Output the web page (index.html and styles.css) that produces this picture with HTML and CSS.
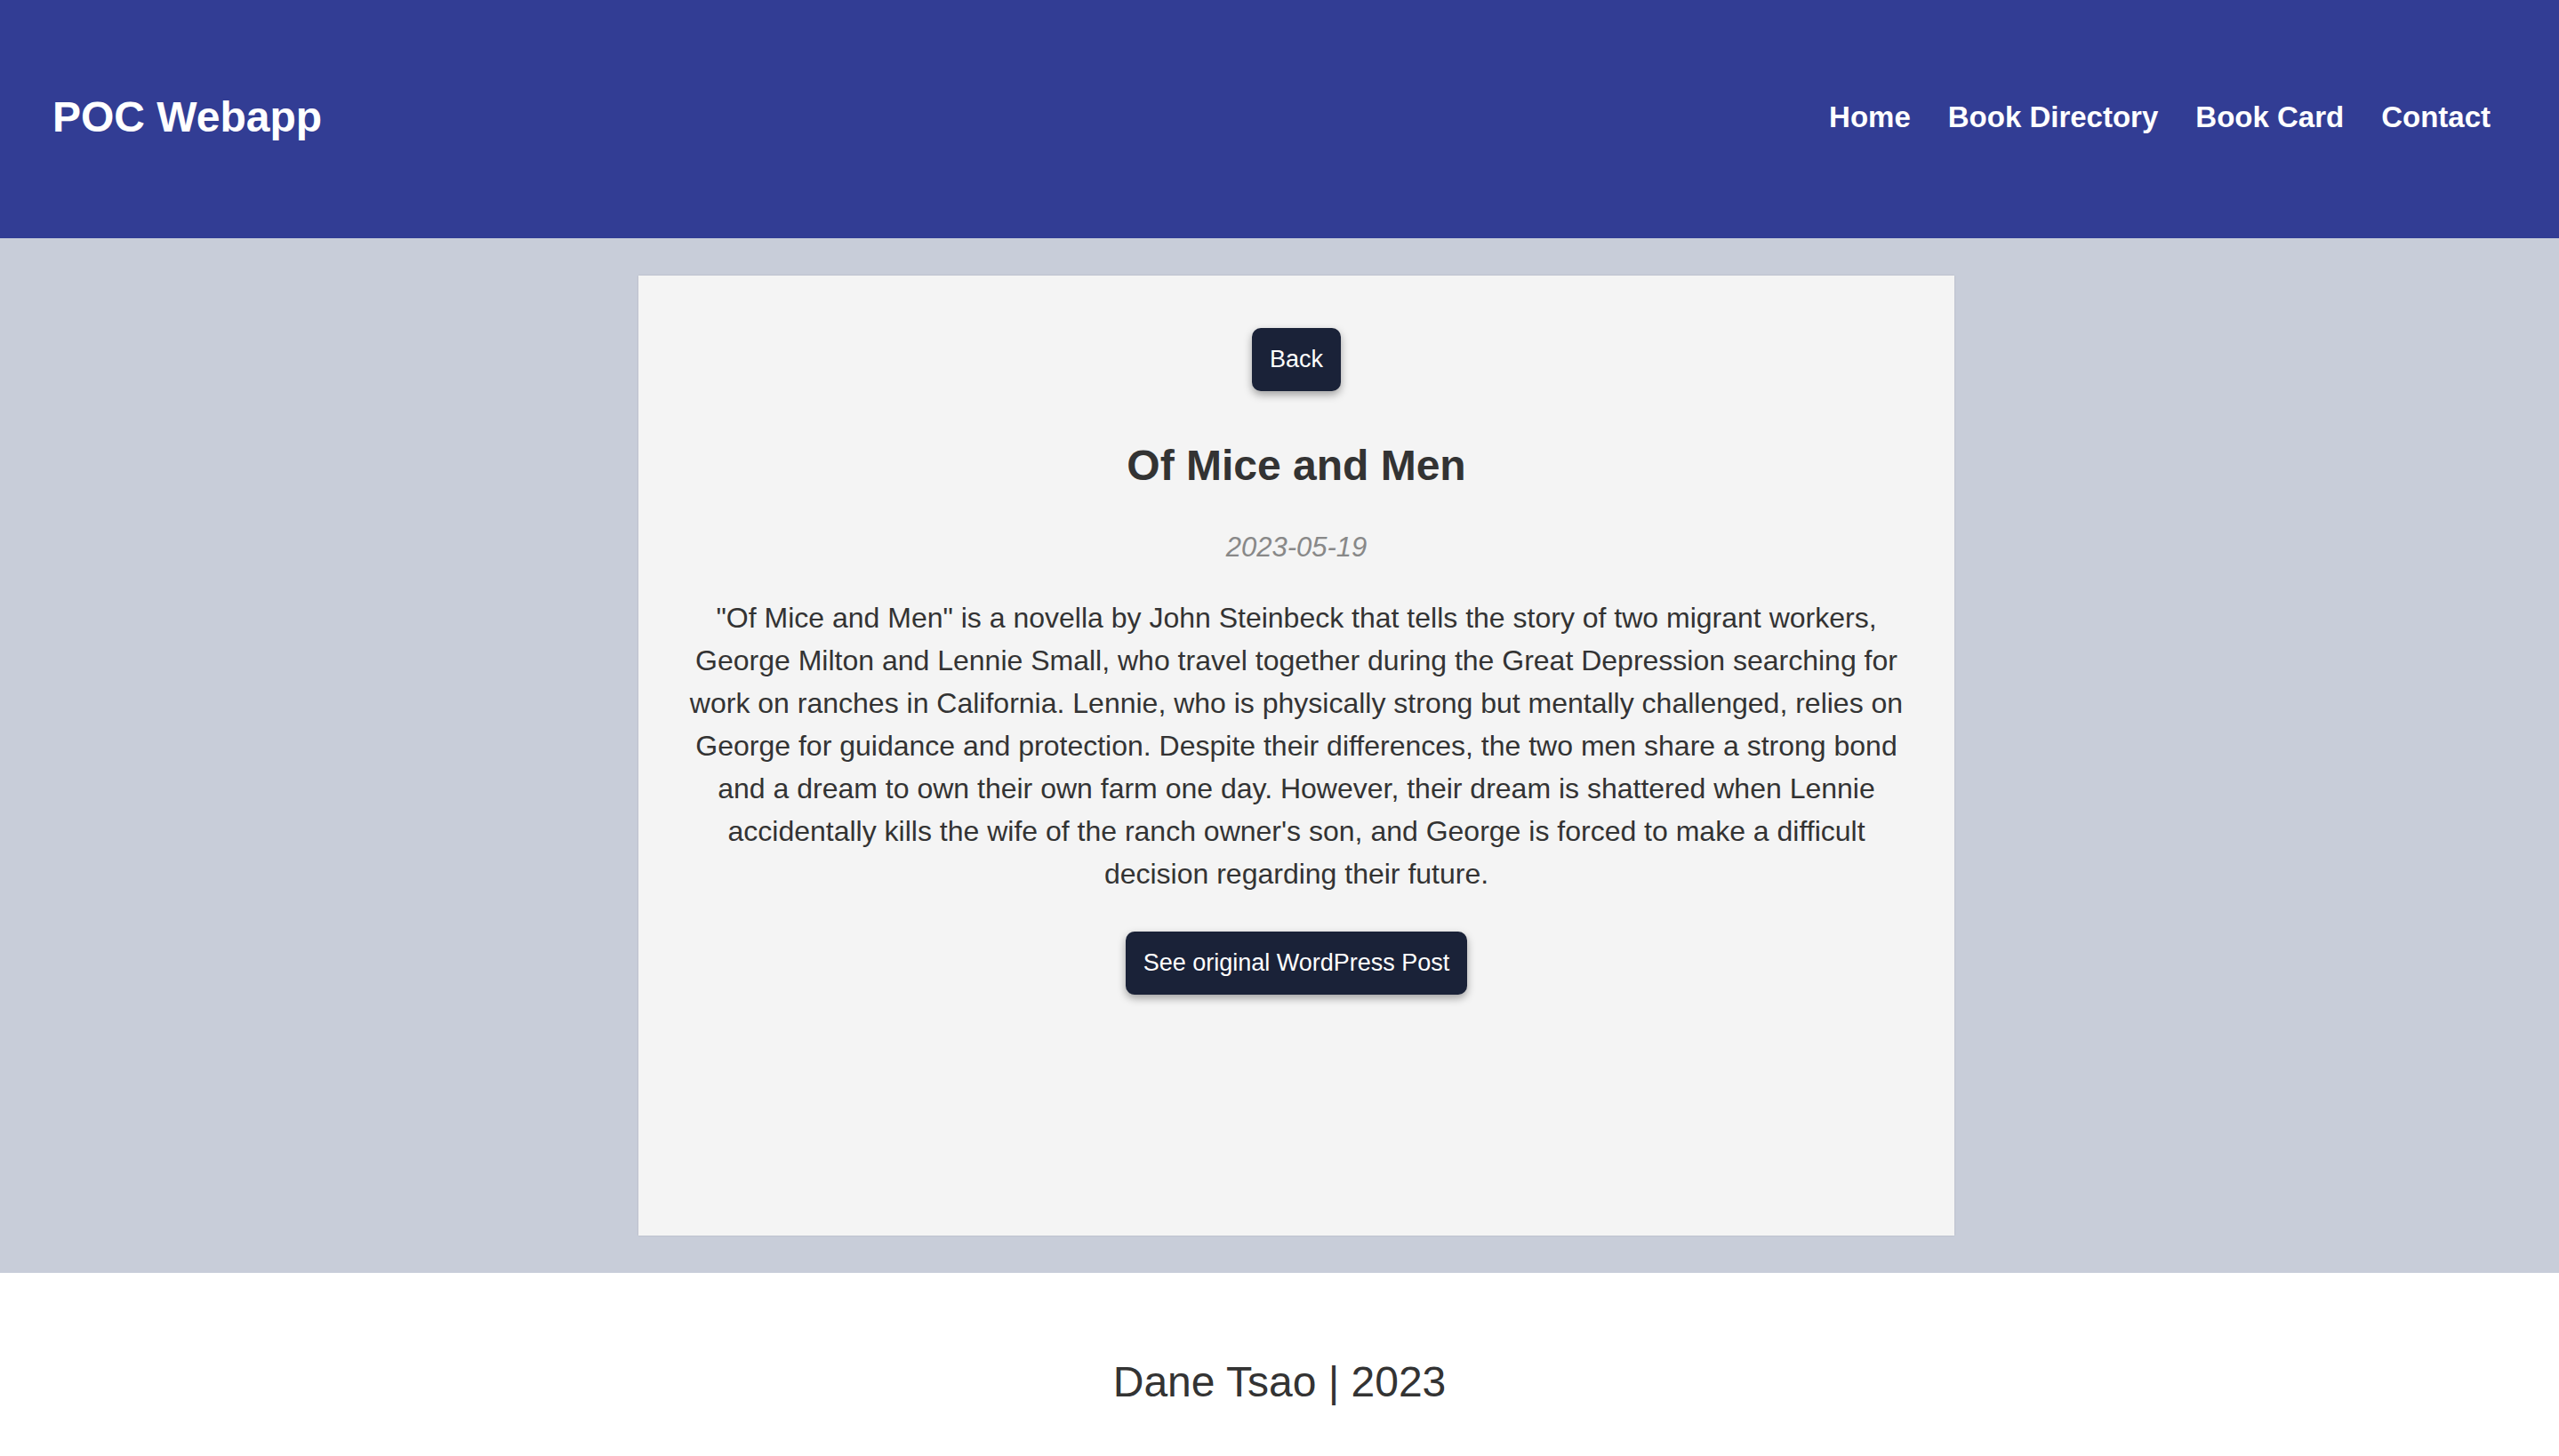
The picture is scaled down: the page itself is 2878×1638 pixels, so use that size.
FILE: index.html
```html
<!DOCTYPE html>
<html lang="en">
<head>
<meta charset="utf-8">
<title>POC Webapp - Of Mice and Men</title>
<link rel="stylesheet" href="styles.css">
</head>
<body>
<header class="site-header">
  <div class="logo">POC Webapp</div>
  <nav class="nav">
    <a class="nav-link" href="#">Home</a>
    <a class="nav-link" href="#">Book Directory</a>
    <a class="nav-link" href="#">Book Card</a>
    <a class="nav-link" href="#">Contact</a>
  </nav>
</header>
<main class="main">
  <article class="card">
    <button class="btn">Back</button>
    <h1 class="title">Of Mice and Men</h1>
    <p class="date">2023-05-19</p>
    <p class="body-text">"Of Mice and Men" is a novella by John Steinbeck that tells the story of two migrant workers, George Milton and Lennie Small, who travel together during the Great Depression searching for work on ranches in California. Lennie, who is physically strong but mentally challenged, relies on George for guidance and protection. Despite their differences, the two men share a strong bond and a dream to own their own farm one day. However, their dream is shattered when Lennie accidentally kills the wife of the ranch owner's son, and George is forced to make a difficult decision regarding their future.</p>
    <button class="btn btn-wp">See original WordPress Post</button>
  </article>
</main>
<footer class="footer">
  <p class="footer-text">Dane Tsao | 2023</p>
</footer>
</body>
</html>
```
FILE: styles.css
```css
* { box-sizing: border-box; }
html, body { margin: 0; padding: 0; }
body {
  font-family: "Liberation Sans", Arial, Helvetica, sans-serif;
  color: #333333;
  background: #ffffff;
}
.site-header {
  height: 268px;
  background: #323d94;
  display: flex;
  align-items: center;
  justify-content: space-between;
  padding: 0 77px 5px 59px;
}
.logo {
  color: #ffffff;
  font-weight: bold;
  font-size: 48px;
}
.nav {
  display: flex;
  gap: 42px;
}
.nav-link {
  color: #ffffff;
  text-decoration: none;
  font-weight: bold;
  font-size: 33px;
}
.main {
  background: #c8cdd9;
  display: flex;
  justify-content: center;
  padding: 42px 0 42px 38px;
}
.card {
  width: 1480px;
  min-height: 1080px;
  background: #f4f4f4;
  box-shadow: 0 0 2px rgba(0, 0, 0, 0.12);
  padding: 59px 44px 40px;
  display: flex;
  flex-direction: column;
  align-items: center;
  text-align: center;
}
.btn {
  font-family: "Liberation Sans", Arial, Helvetica, sans-serif;
  font-size: 27px;
  line-height: 31px;
  color: #ffffff;
  background: #1a2238;
  border: none;
  border-radius: 10px;
  padding: 20px 20px;
  box-shadow: 0 4px 10px rgba(0, 0, 0, 0.35);
  cursor: pointer;
}
.title {
  margin: 56px 0 0;
  font-size: 48px;
  line-height: 56px;
  font-weight: bold;
  color: #333333;
}
.date {
  margin: 46px 0 0;
  font-size: 31px;
  line-height: 36px;
  font-style: italic;
  color: #888888;
}
.body-text {
  margin: 37px 0 0;
  width: 1392px;
  font-size: 32px;
  line-height: 48px;
  color: #333333;
}
.btn-wp {
  margin-top: 41px;
}
.footer {
  background: #ffffff;
  padding: 95px 0 95px;
  text-align: center;
}
.footer-text {
  margin: 0;
  font-size: 48px;
  line-height: 56px;
  color: #333333;
}
```
